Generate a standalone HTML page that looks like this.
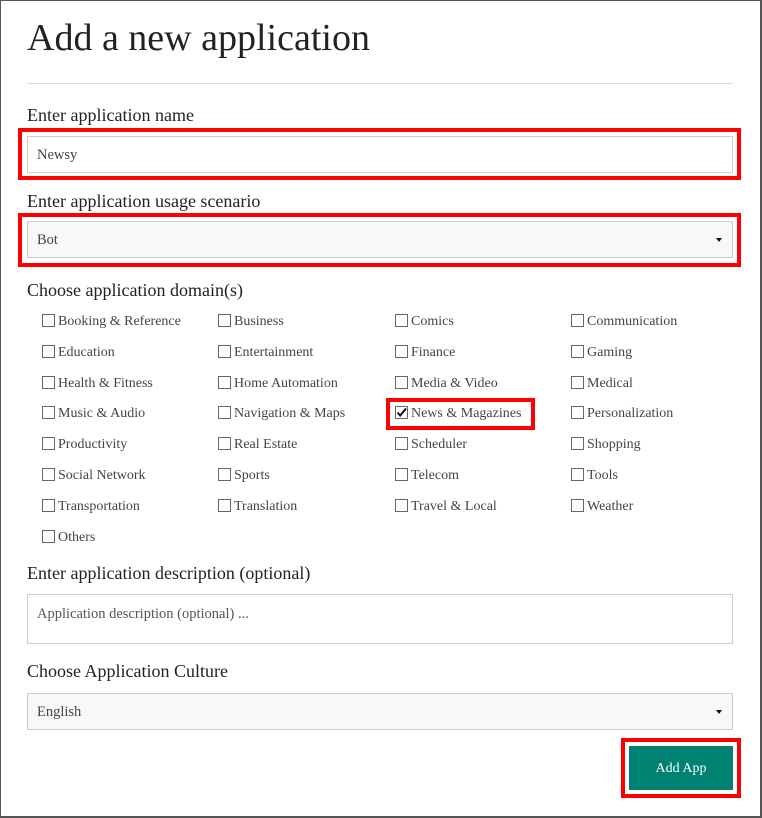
<!DOCTYPE html>
<html><head><style>
*{margin:0;padding:0;box-sizing:border-box}
body{width:762px;height:818px;background:#fff;font-family:"Liberation Serif",serif;color:#222;position:relative;overflow:hidden}
.frame{position:absolute;left:0;top:0;width:762px;height:818px;border:1px solid #555;border-right-width:2px;border-bottom-width:2px}
.a{position:absolute;white-space:nowrap}
.lbl{font-size:18px;color:#222}
.red{position:absolute;border:4px solid #f00}
.inp{position:absolute;left:27px;width:706px;border:1px solid #ccc;background:#fff;font-size:14.5px;color:#444;padding-left:9px;display:flex;align-items:center}
.sel{background:#f8f8f8}
.caret{position:absolute;right:10px;top:50%;margin-top:-2px;width:0;height:0;border-left:3.5px solid transparent;border-right:3.5px solid transparent;border-top:4px solid #111}
.cb{position:absolute;width:13px;height:13px;border:1px solid #666;background:#fff}
.ct{position:absolute;font-size:14px;color:#444;white-space:nowrap}
</style></head><body>
<div class="frame"></div>
<div class="a" style="left:27px;top:16px;font-size:38px;color:#222">Add a new application</div>
<div class="a" style="left:27px;top:83px;width:706px;height:1px;background:#ddd"></div>

<div class="a lbl" style="left:27px;top:105px">Enter application name</div>
<div class="red" style="left:18px;top:128px;width:723px;height:52px"></div>
<div class="inp" style="top:136px;height:37px;padding-top:2px">Newsy</div>

<div class="a lbl" style="left:27px;top:191px">Enter application usage scenario</div>
<div class="red" style="left:18px;top:213px;width:723px;height:54px"></div>
<div class="inp sel" style="top:221px;height:37px;padding-top:2px">Bot<span class="caret"></span></div>

<div class="a lbl" style="left:27px;top:280px">Choose application domain(s)</div>

<div class="red" style="left:386px;top:398px;width:149px;height:32px"></div>

<div class="cb" style="left:42px;top:314px"></div><div class="ct" style="left:58px;top:314px">Booking &amp; Reference</div>
<div class="cb" style="left:218px;top:314px"></div><div class="ct" style="left:234px;top:314px">Business</div>
<div class="cb" style="left:395px;top:314px"></div><div class="ct" style="left:411px;top:314px">Comics</div>
<div class="cb" style="left:571px;top:314px"></div><div class="ct" style="left:587px;top:314px">Communication</div>

<div class="cb" style="left:42px;top:345px"></div><div class="ct" style="left:58px;top:345px">Education</div>
<div class="cb" style="left:218px;top:345px"></div><div class="ct" style="left:234px;top:345px">Entertainment</div>
<div class="cb" style="left:395px;top:345px"></div><div class="ct" style="left:411px;top:345px">Finance</div>
<div class="cb" style="left:571px;top:345px"></div><div class="ct" style="left:587px;top:345px">Gaming</div>

<div class="cb" style="left:42px;top:376px"></div><div class="ct" style="left:58px;top:376px">Health &amp; Fitness</div>
<div class="cb" style="left:218px;top:376px"></div><div class="ct" style="left:234px;top:376px">Home Automation</div>
<div class="cb" style="left:395px;top:376px"></div><div class="ct" style="left:411px;top:376px">Media &amp; Video</div>
<div class="cb" style="left:571px;top:376px"></div><div class="ct" style="left:587px;top:376px">Medical</div>

<div class="cb" style="left:42px;top:406px"></div><div class="ct" style="left:58px;top:406px">Music &amp; Audio</div>
<div class="cb" style="left:218px;top:406px"></div><div class="ct" style="left:234px;top:406px">Navigation &amp; Maps</div>
<div class="cb" style="left:395px;top:406px"><svg width="13" height="13" style="position:absolute;left:-1px;top:-1px"><path d="M2.5 6.5 L5.2 9.5 L11 2.5" stroke="#111" stroke-width="2" fill="none"/></svg></div><div class="ct" style="left:411px;top:406px">News &amp; Magazines</div>
<div class="cb" style="left:571px;top:406px"></div><div class="ct" style="left:587px;top:406px">Personalization</div>

<div class="cb" style="left:42px;top:437px"></div><div class="ct" style="left:58px;top:437px">Productivity</div>
<div class="cb" style="left:218px;top:437px"></div><div class="ct" style="left:234px;top:437px">Real Estate</div>
<div class="cb" style="left:395px;top:437px"></div><div class="ct" style="left:411px;top:437px">Scheduler</div>
<div class="cb" style="left:571px;top:437px"></div><div class="ct" style="left:587px;top:437px">Shopping</div>

<div class="cb" style="left:42px;top:468px"></div><div class="ct" style="left:58px;top:468px">Social Network</div>
<div class="cb" style="left:218px;top:468px"></div><div class="ct" style="left:234px;top:468px">Sports</div>
<div class="cb" style="left:395px;top:468px"></div><div class="ct" style="left:411px;top:468px">Telecom</div>
<div class="cb" style="left:571px;top:468px"></div><div class="ct" style="left:587px;top:468px">Tools</div>

<div class="cb" style="left:42px;top:499px"></div><div class="ct" style="left:58px;top:499px">Transportation</div>
<div class="cb" style="left:218px;top:499px"></div><div class="ct" style="left:234px;top:499px">Translation</div>
<div class="cb" style="left:395px;top:499px"></div><div class="ct" style="left:411px;top:499px">Travel &amp; Local</div>
<div class="cb" style="left:571px;top:499px"></div><div class="ct" style="left:587px;top:499px">Weather</div>

<div class="cb" style="left:42px;top:530px"></div><div class="ct" style="left:58px;top:530px">Others</div>

<div class="a lbl" style="left:27px;top:563px">Enter application description (optional)</div>
<div class="inp" style="top:594px;height:50px;align-items:flex-start;padding-top:11px;color:#555">Application description (optional) ...</div>

<div class="a lbl" style="left:27px;top:661px">Choose Application Culture</div>
<div class="inp sel" style="top:693px;height:37px;padding-top:2px">English<span class="caret"></span></div>

<div class="red" style="left:621px;top:738px;width:120px;height:60px"></div>
<div class="a" style="left:629px;top:746px;width:104px;height:44px;background:#008272;color:#fff;font-size:14px;display:flex;align-items:center;justify-content:center;padding-top:1px">Add App</div>
</body></html>
